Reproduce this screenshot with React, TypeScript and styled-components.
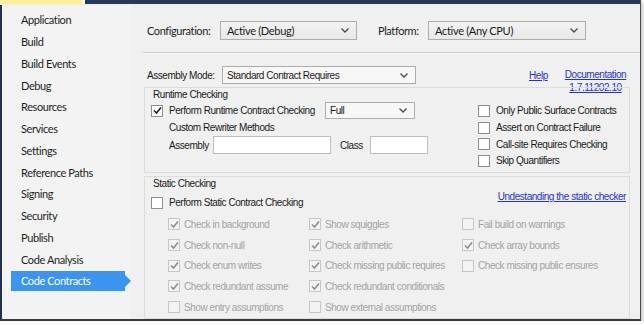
import React from 'react';
import styled, { createGlobalStyle } from 'styled-components';

const GlobalStyle = createGlobalStyle`
  html, body { margin: 0; padding: 0; background: #fbfbfb; }
  body { font-family: "Liberation Sans", Arial, sans-serif; }
`;

const ui = `"Lato", "Noto Sans", sans-serif`;

const Window = styled.div`
  width: 641px;
  height: 321px;
  box-sizing: border-box;
  display: flex;
  flex-direction: column;
  background: #f0f0f0;
  border-right: 1px solid #4d4d4d;
  border-bottom: 2px solid #3a3a3a;
  box-shadow: 2px 2px 3px rgba(0, 0, 0, 0.2);
  overflow: hidden;
`;

const TitleStrip = styled.div`
  display: flex;
  height: 4px;
  background: #fff;
`;

const Tab = styled.div<{ $w?: number }>`
  width: ${p => (p.$w ? `${p.$w}px` : 'auto')};
  flex: ${p => (p.$w ? 'none' : 1)};
  background: ${p => (p.$w ? '#fcee9a' : '#2a3856')};
  margin-right: ${p => (p.$w ? '3px' : '0')};
`;

const StripRule = styled.div`
  height: 1px;
  background: #eef3d8;
`;

const Body = styled.div`
  flex: 1;
  display: flex;
  border-left: 2px solid #223050;
  min-height: 0;
`;

const Sidebar = styled.nav`
  width: 129px;
  padding-top: 4px;
  background: #f3f3f3;
  display: flex;
  flex-direction: column;
`;

const NavItem = styled.div<{ $active?: boolean }>`
  position: relative;
  display: flex;
  align-items: center;
  height: ${p => (p.$active ? '20px' : '21.75px')};
  margin: ${p => (p.$active ? '0.9px 0 0.85px 9px' : '0')};
  width: ${p => (p.$active ? '104px' : 'auto')};
  padding-left: ${p => (p.$active ? '10px' : '19px')};
  font-family: ${ui};
  font-size: 11px;
  letter-spacing: -0.4px;
  color: ${p => (p.$active ? '#fff' : '#1e1e1e')};
  background: ${p => (p.$active ? '#3b94f0' : 'transparent')};

  &::after {
    content: ${p => (p.$active ? "''" : 'none')};
    position: absolute;
    left: 100%;
    top: 4px;
    border-left: 6px solid #3b94f0;
    border-top: 6px solid transparent;
    border-bottom: 6px solid transparent;
  }
`;

const Content = styled.main`
  flex: 1;
  display: flex;
  flex-direction: column;
  padding: 16px 0 0 12px;
  min-width: 0;
`;

const TopRow = styled.div`
  display: flex;
  align-items: center;
  height: 19px;
  padding-left: 4px;
`;

const TopLabel = styled.span<{ $w: number; $gap?: number }>`
  width: ${p => p.$w}px;
  margin-left: ${p => p.$gap ?? 0}px;
  font-family: ${ui};
  font-size: 11px;
  letter-spacing: -0.4px;
  color: #1e1e1e;
`;

const SelectBox = styled.div<{ $w: number; $h?: number; $small?: boolean }>`
  width: ${p => p.$w}px;
  height: ${p => p.$h ?? 19}px;
  box-sizing: border-box;
  display: flex;
  align-items: center;
  justify-content: space-between;
  padding: 0 7px 0 ${p => (p.$small ? 4 : 6)}px;
  border: 1px solid #adadad;
  background: ${p => (p.$small ? '#f7f7f7' : 'linear-gradient(#f2f2f2, #e8e8e8)')};
  font-family: ${p => (p.$small ? `"Liberation Sans", Arial, sans-serif` : ui)};
  font-size: ${p => (p.$small ? '10px' : '11px')};
  letter-spacing: ${p => (p.$small ? '-0.45px' : '-0.3px')};
  color: #1a1a1a;
`;

const Separator = styled.div`
  margin-top: 12px;
  border-top: 1px solid #c9c9c9;
  border-bottom: 1px solid #fafafa;
`;

const AssemblyRow = styled.div`
  display: flex;
  align-items: center;
  height: 18px;
  margin-top: 12px;
  padding-left: 4px;
`;

const Text = styled.span<{ $w?: number; $gap?: number; $muted?: boolean }>`
  width: ${p => (p.$w ? `${p.$w}px` : 'auto')};
  flex: none;
  margin-left: ${p => p.$gap ?? 0}px;
  font-size: 10px;
  letter-spacing: -0.45px;
  color: ${p => (p.$muted ? '#a3a3a3' : '#1a1a1a')};
  white-space: nowrap;
`;

const Link = styled.a<{ $gap?: number }>`
  margin-left: ${p => p.$gap ?? 0}px;
  font-size: 10px;
  letter-spacing: -0.45px;
  color: #1f34c9;
  text-decoration: underline;
  white-space: nowrap;
  cursor: pointer;
`;

const StaticLink = styled(Link)`
  margin-left: auto;
  margin-top: 13px;
  line-height: 14px;
`;

const DocLinks = styled.div`
  align-self: flex-start;
  margin-top: 2px;
  margin-left: 17px;
  display: flex;
  flex-direction: column;
  align-items: center;
  line-height: 13px;
`;

const Group = styled.section<{ $grow?: boolean }>`
  margin: 3px 0 0 1px;
  width: 486px;
  box-sizing: border-box;
  border: 1px solid #dcdcdc;
  flex: ${p => (p.$grow ? 1 : 'none')};
  display: flex;
  flex-direction: column;
`;

const GroupTitle = styled.div<{ $indent?: number }>`
  padding-left: ${p => p.$indent ?? 8}px;
  line-height: 14px;
  font-size: 10px;
  letter-spacing: -0.45px;
  color: #1a1a1a;
`;

const GroupBody = styled.div`
  display: flex;
`;

const LeftCol = styled.div<{ $pb?: number }>`
  display: flex;
  flex-direction: column;
  padding-left: 6px;
  padding-bottom: ${p => p.$pb ?? 0}px;
`;

const RightCol = styled.div`
  margin-left: auto;
  width: 151px;
  display: flex;
  flex-direction: column;
  padding-top: 0.5px;
`;

const Row = styled.div<{ $h?: number; $indent?: number; $mt?: number }>`
  display: flex;
  align-items: center;
  height: ${p => p.$h ?? 17}px;
  margin-top: ${p => p.$mt ?? 0}px;
  padding-left: ${p => p.$indent ?? 0}px;
`;

const Input = styled.div<{ $w: number }>`
  width: ${p => p.$w}px;
  height: 18px;
  box-sizing: border-box;
  border: 1px solid #bdbdbd;
  background: #fff;
`;

const Box = styled.span<{ $disabled?: boolean }>`
  width: 12px;
  height: 12px;
  box-sizing: border-box;
  flex: none;
  display: flex;
  align-items: center;
  justify-content: center;
  border: 1px solid ${p => (p.$disabled ? '#c6c6c6' : '#8e8e8e')};
  background: ${p => (p.$disabled ? '#f3f3f3' : '#fff')};
  margin-right: ${p => (p.$disabled ? 4 : 6)}px;
`;

const HeaderRow = styled.div`
  display: flex;
  align-items: flex-start;
  padding-right: 3px;
`;

const StaticGrid = styled.div`
  display: grid;
  grid-template-columns: 141px 153px 1fr;
  grid-auto-rows: 20.7px;
  margin-top: 3px;
  padding-left: 23px;
`;

const Cell = styled.div`
  display: flex;
  align-items: center;
`;

function Chevron() {
  return (
    <svg width="8" height="5" viewBox="0 0 8 5">
      <polyline points="0.5,0.5 4,4 7.5,0.5" fill="none" stroke="#4a4a4a" strokeWidth="1.3" />
    </svg>
  );
}

function Check({ checked, disabled, label, labelW }: { checked?: boolean; disabled?: boolean; label: string; labelW?: number }) {
  return (
    <>
      <Box $disabled={disabled}>
        {checked && (
          <svg width="9" height="9" viewBox="0 0 9 9">
            <polyline points="1,4.5 3.5,7 8,1.5" fill="none" stroke={disabled ? '#8d8d8d' : '#222'} strokeWidth="1.6" />
          </svg>
        )}
      </Box>
      <Text $muted={disabled} $w={labelW}>{label}</Text>
    </>
  );
}

const navItems = [
  'Application', 'Build', 'Build Events', 'Debug', 'Resources', 'Services', 'Settings',
  'Reference Paths', 'Signing', 'Security', 'Publish', 'Code Analysis', 'Code Contracts',
];

const runtimeOptions = [
  'Only Public Surface Contracts',
  'Assert on Contract Failure',
  'Call-site Requires Checking',
  'Skip Quantifiers',
];

const staticOptions: [string, boolean][] = [
  ['Check in background', true], ['Show squiggles', true], ['Fail build on warnings', false],
  ['Check non-null', true], ['Check arithmetic', true], ['Check array bounds', true],
  ['Check enum writes', true], ['Check missing public requires', true], ['Check missing public ensures', false],
  ['Check redundant assume', true], ['Check redundant conditionals', true], ['', false],
  ['Show entry assumptions', false], ['Show external assumptions', false], ['', false],
];

export default function App() {
  return (
    <>
      <GlobalStyle />
      <Window>
        <TitleStrip>
          <Tab $w={82} />
          <Tab />
        </TitleStrip>
        <StripRule />
        <Body>
          <Sidebar>
            {navItems.map(n => (
              <NavItem key={n} $active={n === 'Code Contracts'}>{n}</NavItem>
            ))}
          </Sidebar>
          <Content>
            <TopRow>
              <TopLabel $w={73}>Configuration:</TopLabel>
              <SelectBox $w={137}>Active (Debug)<Chevron /></SelectBox>
              <TopLabel $w={50} $gap={21}>Platform:</TopLabel>
              <SelectBox $w={158}>Active (Any CPU)<Chevron /></SelectBox>
            </TopRow>
            <Separator />
            <AssemblyRow>
              <Text $w={75}>Assembly Mode:</Text>
              <SelectBox $w={194} $h={18} $small>Standard Contract Requires<Chevron /></SelectBox>
              <Link $gap={113}>Help</Link>
              <DocLinks>
                <Link>Documentation</Link>
                <Link>1.7.11202.10</Link>
              </DocLinks>
            </AssemblyRow>

            <Group>
              <GroupTitle>Runtime Checking</GroupTitle>
              <GroupBody>
                <LeftCol $pb={18}>
                  <Row>
                    <Check checked label="Perform Runtime Contract Checking" labelW={156} />
                    <SelectBox $w={90} $h={17} $small>Full<Chevron /></SelectBox>
                  </Row>
                  <Row $indent={18}><Text>Custom Rewriter Methods</Text></Row>
                  <Row $h={18} $indent={18}>
                    <Text $w={44}>Assembly</Text>
                    <Input $w={118} />
                    <Text $w={30} $gap={9}>Class</Text>
                    <Input $w={58} />
                  </Row>
                </LeftCol>
                <RightCol>
                  {runtimeOptions.map(o => (
                    <Row key={o} $h={16.7}><Check label={o} /></Row>
                  ))}
                </RightCol>
              </GroupBody>
            </Group>

            <Group $grow>
              <HeaderRow>
                <LeftCol>
                  <GroupTitle $indent={2}>Static Checking</GroupTitle>
                  <Row $mt={3}>
                    <Check label="Perform Static Contract Checking" />
                  </Row>
                </LeftCol>
                <StaticLink>Undestanding the static checker</StaticLink>
              </HeaderRow>
              <StaticGrid>
                {staticOptions.map(([label, checked], i) => (
                  <Cell key={i}>{label && <Check disabled checked={checked} label={label} />}</Cell>
                ))}
              </StaticGrid>
            </Group>
          </Content>
        </Body>
      </Window>
    </>
  );
}
